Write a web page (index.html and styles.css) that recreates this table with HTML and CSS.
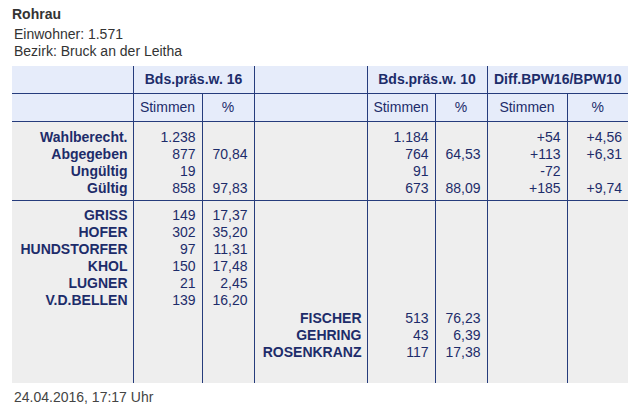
FILE: index.html
```html
<!DOCTYPE html>
<html lang="de">
<head>
<meta charset="utf-8">
<title>Rohrau</title>
<link rel="stylesheet" href="styles.css">
</head>
<body>
<div class="page">
  <h1 class="title">Rohrau</h1>
  <div class="info">
    <div>Einwohner: 1.571</div>
    <div>Bezirk: Bruck an der Leitha</div>
  </div>
  <table class="results">
    <colgroup>
      <col class="c-label"><col class="c-v16"><col class="c-p16"><col class="c-label10"><col class="c-v10"><col class="c-p10"><col class="c-vd"><col class="c-pd">
    </colgroup>
    <thead>
      <tr class="head1">
        <th></th>
        <th colspan="2">Bds.präs.w. 16</th>
        <th></th>
        <th colspan="2">Bds.präs.w. 10</th>
        <th colspan="2">Diff.BPW16/BPW10</th>
      </tr>
      <tr class="head2">
        <th></th>
        <th>Stimmen</th>
        <th>%</th>
        <th></th>
        <th>Stimmen</th>
        <th>%</th>
        <th>Stimmen</th>
        <th>%</th>
      </tr>
    </thead>
    <tbody class="totals">
      <tr>
        <td class="label">Wahlberecht.<br>Abgegeben<br>Ungültig<br>Gültig</td>
        <td>1.238<br>877<br>19<br>858</td>
        <td><br>70,84<br><br>97,83</td>
        <td></td>
        <td>1.184<br>764<br>91<br>673</td>
        <td><br>64,53<br><br>88,09</td>
        <td>+54<br>+113<br>-72<br>+185</td>
        <td>+4,56<br>+6,31<br><br>+9,74</td>
      </tr>
    </tbody>
    <tbody class="cands">
      <tr class="cand16">
        <td class="label">GRISS<br>HOFER<br>HUNDSTORFER<br>KHOL<br>LUGNER<br>V.D.BELLEN</td>
        <td>149<br>302<br>97<br>150<br>21<br>139</td>
        <td>17,37<br>35,20<br>11,31<br>17,48<br>2,45<br>16,20</td>
        <td></td>
        <td></td>
        <td></td>
        <td></td>
        <td></td>
      </tr>
      <tr class="cand10">
        <td></td>
        <td></td>
        <td></td>
        <td class="label">FISCHER<br>GEHRING<br>ROSENKRANZ</td>
        <td>513<br>43<br>117</td>
        <td>76,23<br>6,39<br>17,38</td>
        <td></td>
        <td></td>
      </tr>
    </tbody>
  </table>
  <div class="stamp">24.04.2016, 17:17 Uhr</div>
</div>
</body>
</html>
```
FILE: styles.css
```css
html, body {
  margin: 0;
  padding: 0;
  background: #ffffff;
}

.page {
  padding: 6px 0 0 12px;
  font-family: "Liberation Sans", Arial, sans-serif;
  font-size: 14px;
  line-height: 17px;
  color: #333333;
}

.title {
  margin: 0 0 3px 0;
  font-size: 14px;
  font-weight: bold;
  line-height: 17px;
  color: #333333;
}

.info {
  padding-left: 2px;
  color: #333333;
}

.results {
  margin-top: 6px;
  border-collapse: collapse;
  border-style: hidden;
  table-layout: fixed;
  width: 616px;
  color: #1d2c6a;
}

.c-label { width: 121px; }
.c-v16 { width: 69px; }
.c-p16 { width: 52px; }
.c-label10 { width: 113px; }
.c-v10 { width: 68px; }
.c-p10 { width: 52px; }
.c-vd { width: 80px; }
.c-pd { width: 61px; }

.results th,
.results td {
  border-left: 1px solid #263c7c;
  border-right: 1px solid #263c7c;
  line-height: 17px;
  vertical-align: top;
}

.results thead th {
  background: #e6ecfa;
  text-align: center;
  padding: 5px 2px 5px 2px;
  border-bottom: 1px solid #263c7c;
}

.head1 th {
  font-weight: bold;
  padding-top: 6px;
}

.head2 th {
  font-weight: normal;
}

.results td {
  background: #eeeeee;
  text-align: right;
  padding: 0 6px 0 2px;
  white-space: nowrap;
}

.results td.label {
  font-weight: bold;
  padding-right: 5px;
}

.totals td {
  padding-top: 7px;
  padding-bottom: 3px;
  border-bottom: 1px solid #263c7c;
}

.cand16 td {
  padding-top: 6px;
}

.cand10 td {
  padding-top: 1px;
  padding-bottom: 22px;
}

.stamp {
  margin-top: 6px;
  padding-left: 2px;
  color: #444444;
}
```
